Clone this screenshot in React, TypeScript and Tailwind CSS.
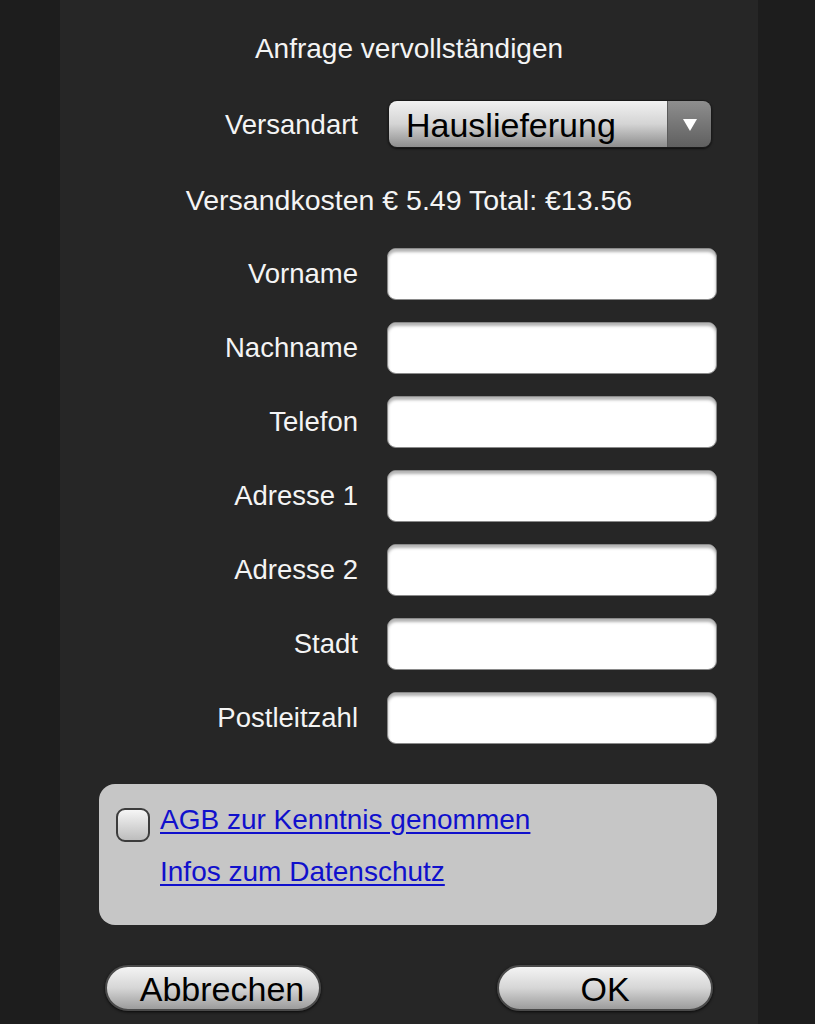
import React from 'react'

const fields = ['Vorname', 'Nachname', 'Telefon', 'Adresse 1', 'Adresse 2', 'Stadt', 'Postleitzahl']

const App = () => {
    return (
        <div className="flex h-[1024px] w-full overflow-hidden bg-[#1d1d1d] font-['Liberation_Sans',Arial,sans-serif]">
            <div className="ml-[60px] flex h-full w-[698px] flex-col bg-[#262626] text-[#f4f4f4]">
                <div className="mt-[33px] h-[32px] text-center text-[28px] leading-[32px]">Anfrage vervollständigen</div>

                <div className="mt-[35px] flex h-[48px] items-center">
                    <div className="w-[298px] pt-[2px] text-right text-[27.5px] leading-[32px]">Versandart</div>
                    <div className="ml-[30px] flex h-[48px] w-[324px] overflow-hidden rounded-[9px] border border-[#1a1a1a] shadow-[0_1px_2px_rgba(0,0,0,0.6)]">
                        <div className="flex flex-1 items-center bg-gradient-to-b from-[#f2f2f2] via-[#d4d4d4] to-[#8e8e8e] pl-[17px] pt-[2px] text-[34px] leading-[40px] text-black">
                            Hauslieferung
                        </div>
                        <div className="flex w-[44px] items-center justify-center border-l border-[#5a5a5a] bg-gradient-to-b from-[#8e8e8e] to-[#606060]">
                            <svg width="16" height="16" viewBox="0 0 16 16">
                                <path d="M1 3 L15 3 L8 15 Z" fill="#ffffff" />
                            </svg>
                        </div>
                    </div>
                </div>

                <div className="mt-[36px] h-[32px] text-center text-[28.5px] leading-[32px]">Versandkosten € 5.49 Total: €13.56</div>

                <div className="mt-[32px] flex flex-col gap-[22px]">
                    {fields.map((f) => (
                        <div key={f} className="flex h-[52px] items-center">
                            <div className="w-[298px] text-right text-[27.5px] leading-[32px]">{f}</div>
                            <div className="ml-[29px] h-[52px] w-[330px] rounded-[9px] border border-[#8a8a8a] bg-white shadow-[inset_0_3px_3px_rgba(0,0,0,0.3)]"></div>
                        </div>
                    ))}
                </div>

                <div className="mt-[40px] ml-[39px] flex h-[141px] w-[618px] flex-col rounded-[16px] bg-[#c6c6c6] pl-[17px] pt-[20px]">
                    <div className="flex items-start">
                        <div className="mt-[4px] h-[34px] w-[34px] rounded-[9px] border-2 border-[#3c3c3c] bg-gradient-to-b from-[#f6f6f6] to-[#bdbdbd]"></div>
                        <a className="ml-[10px] text-[28px] leading-[32px] text-[#1010cc] underline underline-offset-[3px]" href="#">AGB zur Kenntnis genommen</a>
                    </div>
                    <a className="ml-[44px] mt-[14px] text-[28px] leading-[32px] text-[#1010cc] underline underline-offset-[3px]" href="#">Infos zum Datenschutz</a>
                </div>

                <div className="mt-[40px] flex items-center">
                    <button className="ml-[45px] h-[46px] w-[216px] rounded-full border-2 border-[#4a4a4a] bg-gradient-to-b from-[#f4f4f4] via-[#d6d6d6] to-[#9c9c9c] pl-[18px] pt-[2px] text-[34px] leading-[40px] text-black shadow-[0_1px_3px_rgba(0,0,0,0.8)]">
                        Abbrechen
                    </button>
                    <button className="ml-[176px] h-[46px] w-[216px] rounded-full border-2 border-[#4a4a4a] bg-gradient-to-b from-[#f4f4f4] via-[#d6d6d6] to-[#9c9c9c] pt-[2px] text-[34px] leading-[40px] text-black shadow-[0_1px_3px_rgba(0,0,0,0.8)]">
                        OK
                    </button>
                </div>
            </div>
        </div>
    )
}

export default App
